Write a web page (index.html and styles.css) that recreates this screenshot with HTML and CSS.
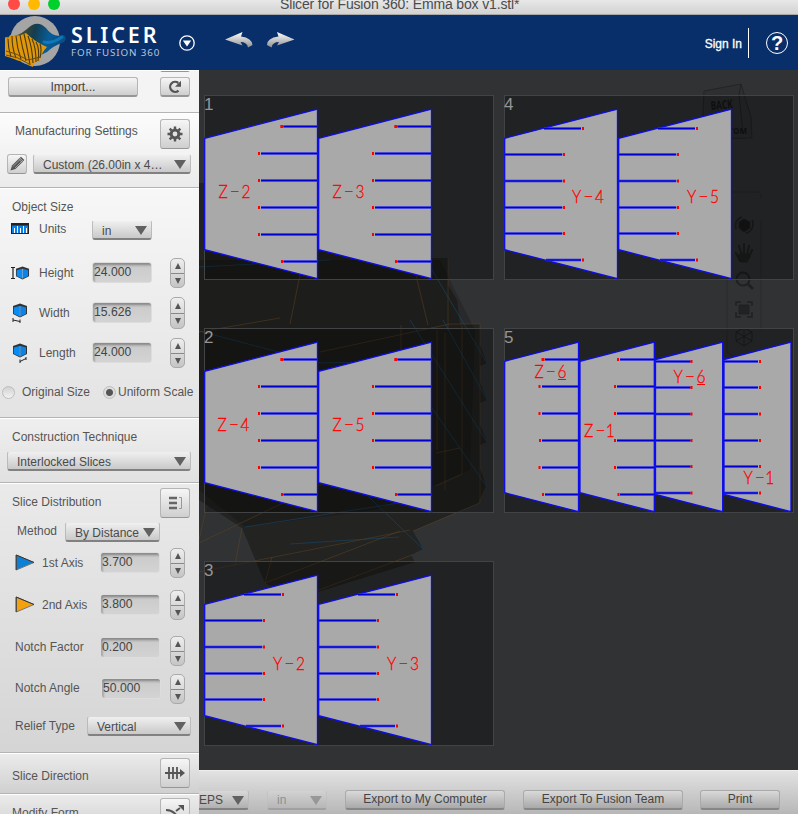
FILE: index.html
```html
<!DOCTYPE html>
<html lang="en">
<head>
<meta charset="utf-8">
<title>Slicer for Fusion 360</title>
<link rel="stylesheet" href="styles.css">
</head>
<body>
<svg class="defs" width="0" height="0" aria-hidden="true">
  <symbol id="z-slice" viewBox="0 0 115 185" overflow="visible">
    <path class="part" d="M.7 43.3 113.5 14.2V183.7L.7 154.7Z"/>
    <path class="cut" d="M79.5 31.5h34M57 58.5h56.5M57 85.5h56.5M57 112.5h56.5M57 139.5h56.5M79.5 166.5h34"/>
    <path class="cut-core" d="M79.5 31.5h34M57 58.5h56.5M57 85.5h56.5M57 112.5h56.5M57 139.5h56.5M79.5 166.5h34"/>
    <path class="dot" d="M76.3 31.5h3M54 58.5h2M54 85.5h2M54 112.5h2M54 139.5h2M77 166.5h2"/>
  </symbol>
  <symbol id="y-slice" viewBox="0 0 115 185" overflow="visible">
    <path class="part" d="M.7 43.3 113.5 14.2V183.7L.7 154.7Z"/>
    <path class="cut" d="M40 33.5h37M.7 59.5h57.5M.7 86h57.5M.7 112.5h57.5M.7 138.5h57.5M42 165h35"/>
    <path class="cut-core" d="M40 33.5h37M.7 59.5h57.5M.7 86h57.5M.7 112.5h57.5M.7 138.5h57.5M42 165h35"/>
    <path class="dot" d="M78 33.5h2M59 59.5h2M59 86h2M59 112.5h2M59 138.5h2M78 165h2"/>
  </symbol>
  <symbol id="cube" viewBox="0 0 16 15"><path d="M1 3 8 .5 15 3v8l-7 3.5L1 11z" fill="#333"/><path d="M1.800 4.500 7.600 3v10.500L1.800 10.800z" fill="#0a8cf5"/><path d="M8.400 3 14 4.500v6.300L8.400 13.500z" fill="#0a84e8"/><path d="M8 3v10.500" stroke="#7cc4ff" stroke-width=".8"/></symbol>
</svg>

<div class="titlebar">
  <span class="light red"></span><span class="light yellow"></span><span class="light green"></span>
  <span class="title">Slicer for Fusion 360: Emma box v1.stl*</span>
</div>

<header class="header">
  <svg class="logo" width="66" height="55" viewBox="0 0 66 55">
    <defs><linearGradient id="wave" x1="0" y1="0" x2="1" y2="0.15"><stop offset="0" stop-color="#bd8a1d"/><stop offset=".32" stop-color="#3d482e"/><stop offset=".5" stop-color="#143d50"/><stop offset=".75" stop-color="#075c98"/><stop offset="1" stop-color="#0a4f86"/></linearGradient></defs>
    <circle cx="35" cy="26" r="25" fill="#a5a5a5"/>
    <path d="M6 22Q18 22 27 14Q37 4 46 13Q53 23 63 20Q68 22 64 27Q53 31 47 37L31 45L6 36Z" fill="url(#wave)"/>
    <path d="M5 22 8 24 10 20Q19 22 26 18Q35 27 47 32Q41 38 40 46L34 48 33 52 28 50 27 46Q19 47 14 44L5 41Z" fill="#df980b"/>
    <path d="M8 24q0 9 3 18M12 21q0 12 4 22M16 21q1 12 5 23M20 20q2 12 6 26M24 19q3 12 6 31M28 21q4 10 5 27M32 24q4 8 4 23M36 27q4 7 2 19M40 29q2 5 0 14" fill="none" stroke="#4c3812" stroke-width="1.100"/>
    <path d="M6 36 16 39 28 45 40 42M6 40 18 43 29 49" fill="none" stroke="#6c4c0c"/>
    <path d="M44 27Q52 29 62 22" fill="none" stroke="#1593dc" stroke-width="3" opacity=".55" stroke-linecap="round"/>
  </svg>
  <div class="brand"><div class="brand-name">SLICER</div><div class="brand-sub">FOR FUSION 360</div></div>
  <svg class="menu" width="16" height="16" viewBox="0 0 16 16"><circle cx="8" cy="8" r="7.200" fill="none" stroke="#fff" stroke-width="1.300"/><path d="M3.800 5.500h8.400L8 11.500z" fill="#fff"/></svg>
  <svg class="history" width="70" height="17" viewBox="0 0 70 17">
    <defs><linearGradient id="silver" x1="0" y1="0" x2="0" y2="1"><stop offset="0" stop-color="#fff"/><stop offset="1" stop-color="#909090"/></linearGradient></defs>
    <path d="M0 7.500 17.500 0 16 4.500Q27 6 27.500 13L23 15.500Q22 10 15.500 10L17.500 13.500Z" fill="url(#silver)"/>
    <path d="M69.500 7.500 52 0 53.500 4.500Q42 6 42 13L46.500 15.500Q47.500 10 54 10L52 13.500Z" fill="url(#silver)"/>
  </svg>
  <span class="sign-in">Sign In</span>
  <span class="divider"></span>
  <span class="help">?</span>
</header>

<div class="workspace">
<aside class="sidebar">
  <section class="files">
    <button class="btn import">Import...</button>
    <div class="file-side"><span class="btn stub"></span>
      <button class="btn refresh"><svg width="14" height="14" viewBox="0 0 14 14"><path d="M10.500 10.600A5 5 0 1 1 10.300 3" fill="none" stroke="#555" stroke-width="2.300"/><path d="M13 .7v6H7z" fill="#555"/></svg></button></div>
  </section>

  <section class="manufacturing">
    <div class="row head"><span>Manufacturing Settings</span>
      <button class="btn tool"><svg width="16" height="16" viewBox="-8 -8 16 16"><circle r="3.900" fill="none" stroke="#555" stroke-width="3"/><path d="M0-7.500V-5M0 7.500V5M-7.500 0H-5M7.500 0H5M-5.300-5.300-3.600-3.600M5.300 5.300 3.600 3.600M-5.300 5.300-3.600 3.600M5.300-5.300 3.600-3.600" stroke="#555" stroke-width="2.400"/></svg></button></div>
    <div class="row preset"><button class="btn pencil"><svg width="16" height="16" viewBox="0 0 16 16"><path d="M1.500 14.500 3 9.500 10.500 2l3.500 3.500L6.500 13z" fill="#555"/><path d="M10.800 1.700 12 .7l3.300 3.300-1 1.200z" fill="#555"/><path d="M4 10.500 11 3.500M6 12l7-7M9.500 2.800l3.800 3.800" stroke="#bbb" stroke-width=".7"/></svg></button>
      <div class="select"><span>Custom (26.00in x 4…</span><i></i></div></div>
  </section>

  <section class="object">
    <div class="row head">Object Size</div>
    <div class="row dim units"><svg width="18" height="11" viewBox="0 0 18 11"><path d="M0 0h18v11H0z" fill="#222"/><path d="M1 2.500h16V10H1z" fill="#0a7fe5"/><path d="M3.500 10V5M6.500 10V3M9.500 10V5M12.500 10V3M15.500 10V5" stroke="#fff"/></svg><span>Units</span><div class="select"><span>in</span><i></i></div></div>
    <div class="row dim"><svg width="20" height="18" viewBox="0 0 20 18"><path d="M0 3.500h4M2 3.500v11M0 14.500h4" stroke="#222" fill="none" stroke-width="1.200"/><use href="#cube" x="4" y="2" width="15" height="14"/></svg><span>Height</span><div class="field">24.000</div><div class="spin"><b></b><b></b></div></div>
    <div class="row dim"><svg width="20" height="20" viewBox="0 0 20 20"><use href="#cube" x="1" y="0" width="16" height="15"/><path d="M2 15v4M2 17l7 1.500M9 16.500v4" stroke="#222" fill="none"/></svg><span>Width</span><div class="field">15.626</div><div class="spin tall"><b></b><b></b></div></div>
    <div class="row dim"><svg width="20" height="20" viewBox="0 0 20 20"><use href="#cube" x="1" y="0" width="16" height="15"/><path d="M9 16.500v3.500M9 18.500l6-3M15 14v3" stroke="#222" fill="none"/></svg><span>Length</span><div class="field">24.000</div><div class="spin"><b></b><b></b></div></div>
    <div class="row scale"><span class="radio"></span><span>Original Size</span><span class="radio on"></span><span>Uniform Scale</span></div>
  </section>

  <section class="technique">
    <div class="row head">Construction Technique</div>
    <div class="select"><span>Interlocked Slices</span><i></i></div>
  </section>

  <section class="distribution">
    <div class="row head"><span>Slice Distribution</span><button class="btn tool"><svg width="15" height="14" viewBox="0 0 15 14"><path d="M1 2h8M1 7h8M1 12h8" stroke="#666" stroke-width="2.300"/><path d="M11 1.500h2.500v11H11" stroke="#999" fill="none"/></svg></button></div>
    <div class="row method"><span>Method</span><div class="select"><span>By Distance</span><i></i></div></div>
    <div class="row axis first"><svg width="20" height="17" viewBox="0 0 20 17"><path d="M1.200 1 19 8.500 1.200 16z" fill="#0b80d4"/><path d="M19 8.500 1.200 16V1z" fill="none" stroke="#777"/><path d="M1.200 16V1L19 8.500" fill="none" stroke="#333"/></svg><span>1st Axis</span><div class="field">3.700</div><div class="spin"><b></b><b></b></div></div>
    <div class="row axis second"><svg width="20" height="17" viewBox="0 0 20 17"><path d="M1.200 1 19 8.500 1.200 16z" fill="#f3a20d"/><path d="M19 8.500 1.200 16V1z" fill="none" stroke="#777"/><path d="M1.200 16V1L19 8.500" fill="none" stroke="#333"/></svg><span>2nd Axis</span><div class="field">3.800</div><div class="spin"><b></b><b></b></div></div>
    <div class="row notch"><span>Notch Factor</span><div class="field">0.200</div><div class="spin"><b></b><b></b></div></div>
    <div class="row notch angle"><span>Notch Angle</span><div class="field">50.000</div><div class="spin"><b></b><b></b></div></div>
    <div class="row relief"><span>Relief Type</span><div class="select"><span>Vertical</span><i></i></div></div>
  </section>

  <section class="direction">
    <div class="row head"><span>Slice Direction</span><button class="btn tool"><svg width="20" height="14" viewBox="0 0 20 14"><path d="M0 7h17M4 1v12M8 1v12M12 1v12" stroke="#555" stroke-width="1.800"/><path d="M15 3l5 4-5 4z" fill="#555"/></svg></button></div>
  </section>
  <section class="modify">
    <div class="row head"><span>Modify Form</span><button class="btn tool"><svg width="20" height="16" viewBox="0 0 20 16"><path d="M1 5Q10 5 14 15M1 10q5 0 7 6M11 6l4-3" fill="none" stroke="#555" stroke-width="2"/><path d="M13 0h6v6z" fill="#555"/></svg></button></div>
  </section>
</aside>

<main class="stage">
  <div class="viewport">
    <svg class="scene" width="599" height="700" viewBox="199 70 599 700">
      <path d="M199 183 325 178 360 183 365 220 420 258H448V285L457 300 460 324H480V345L487 363 480 366V382L487 400 480 403V425L487 442 480 445V468L486 486 478 503 413 531 423 549 411 555 415 562 295 599 265 583 242 528 199 500Z" fill="#0a0700" opacity=".34"/>
      <path d="M199 260H440L475 330 470 470 375 510 245 527 199 490Z" opacity=".16"/>
      <g fill="none" stroke="#6b4a20" stroke-width="1" opacity=".42">
        <path d="M290 324 302 265 311 207M283 364 274 412M413 263 428 325M448 258V330M199 332 280 318M320 352 450 324 480 324V503L413 531M199 543 325 483M199 572 410 530M265 583 400 531M235 565 242 528M265 583 272 557M295 599 412 555M437 330V450M462 325V474L436 486M445 333V490M436 453 460 448M401 325V410M199 540 207 505"/>
      </g>
      <g fill="none" stroke="#164f78" stroke-width="1" opacity=".5">
        <path d="M199 267 330 260M199 331 320 363 410 361M245 527 399 503M290 544 399 537M291 420 320 450 423 549M400 362 487 487M410 320 487 442M425 258 487 363M443 320 487 400"/>
      </g>
      <g class="viewcube"><path d="M704 91 741 84 751 117 752 138 702 139Z" fill="#2e2f30" stroke="#242424"/><path d="M741 84 739 94 743 134" fill="none" stroke="#222"/><text transform="translate(711 110) rotate(-5)" textLength="22" lengthAdjust="spacingAndGlyphs">BACK</text><text x="712" y="134" class="bottom">BOTTOM</text></g>
      <g class="nav" fill="none" stroke="#1f2021"><path d="M727 192h31q3 0 3 6M727 350q0 5 6 5M727 193v157M761 220v110" opacity=".4"/>
        <path d="M739 222l5-3 6 3v6l-6 4-5-4z" fill="#191a1b"/><path d="M736 229a9 9 0 0 1 6-12M752 220a9 9 0 0 1-6 13" stroke-width="1.500"/>
        <path d="M740 261 736 253M742 255 739 246M744 254V244M747 255 749 246M749 257 752 250" stroke-width="2" stroke-linecap="round"/><path d="M740 254h9l1 3-3 5h-6l-4-6z" fill="#1f2021"/>
        <circle cx="743" cy="279" r="6.500" stroke-width="2"/><path d="M748 284l5 5" stroke-width="3"/>
        <path d="M736 306v-4h5M747 302h5v4M736 312v5h5M747 317h5v-5" stroke-width="1.500"/><path d="M739 305h10v9h-10z" fill="#222"/>
        <path d="M744 328l8 4v9l-8 5-8-5v-9zM744 328v18M736 332l16 9M752 332l-16 9"/></g>
    </svg>
    <div class="sheets">
      <div class="sheet"><svg viewBox="0 0 290 185"><use href="#z-slice" width="115" height="185"/><use href="#z-slice" x="114" width="115" height="185"/>
        <text class="num" x="0" y="15">1</text>
        <text class="tag" transform="translate(14.5 103) scale(.84 1)"><tspan>Z</tspan><tspan x="13" dy="-1" textLength="13" lengthAdjust="spacingAndGlyphs">-</tspan><tspan x="27.500" dy="1">2</tspan></text>
        <text class="tag" transform="translate(128.500 103) scale(.84 1)"><tspan>Z</tspan><tspan x="13" dy="-1" textLength="13" lengthAdjust="spacingAndGlyphs">-</tspan><tspan x="27.500" dy="1">3</tspan></text></svg></div>
      <div class="sheet"><svg viewBox="0 0 290 185"><use href="#z-slice" width="115" height="185"/><use href="#z-slice" x="114" width="115" height="185"/>
        <text class="num" x="0" y="15">2</text>
        <text class="tag" transform="translate(13.500 103) scale(.84 1)"><tspan>Z</tspan><tspan x="13" dy="-1" textLength="13" lengthAdjust="spacingAndGlyphs">-</tspan><tspan x="27.500" dy="1">4</tspan></text>
        <text class="tag" transform="translate(128.500 103) scale(.84 1)"><tspan>Z</tspan><tspan x="13" dy="-1" textLength="13" lengthAdjust="spacingAndGlyphs">-</tspan><tspan x="27.500" dy="1">5</tspan></text></svg></div>
      <div class="sheet"><svg viewBox="0 0 290 185"><use href="#y-slice" width="115" height="185"/><use href="#y-slice" x="114" width="115" height="185"/>
        <text class="num" x="0" y="15">3</text>
        <text class="tag" transform="translate(69 108.500) scale(.84 1)"><tspan>Y</tspan><tspan x="13" dy="-1" textLength="13" lengthAdjust="spacingAndGlyphs">-</tspan><tspan x="27.500" dy="1">2</tspan></text>
        <text class="tag" transform="translate(183 108.500) scale(.84 1)"><tspan>Y</tspan><tspan x="13" dy="-1" textLength="13" lengthAdjust="spacingAndGlyphs">-</tspan><tspan x="27.500" dy="1">3</tspan></text></svg></div>
      <div class="sheet"><svg viewBox="0 0 290 185"><use href="#y-slice" width="115" height="185"/><use href="#y-slice" x="114" width="115" height="185"/>
        <text class="num" x="0" y="15">4</text>
        <text class="tag" transform="translate(68 108) scale(.84 1)"><tspan>Y</tspan><tspan x="13" dy="-1" textLength="13" lengthAdjust="spacingAndGlyphs">-</tspan><tspan x="27.500" dy="1">4</tspan></text>
        <text class="tag" transform="translate(183 108) scale(.84 1)"><tspan>Y</tspan><tspan x="13" dy="-1" textLength="13" lengthAdjust="spacingAndGlyphs">-</tspan><tspan x="27.500" dy="1">5</tspan></text></svg></div>
      <div class="sheet"><svg viewBox="0 0 290 185">
        <path class="part" d="M.7 33.300 74.500 14.200V183.700L.7 164.700ZM76 33.300 150.300 14.200V183.700L76 164.700ZM151.500 31.500 218.700 14.200V183.700L151.500 166.500ZM220 31.500 287 14.200V183.700L220 166.500Z"/>
        <path class="cut" d="M41 31.500h33M38 58.500h36M38 85.500h36M38 112.500h36M38 139.500h36M41 166.500h33M116 31.500h34M113 58.500h37M113 85.500h37M113 112.500h37M113 139.500h37M116 166.500h34M151.500 33.500h35M151.500 59.500h35M151.500 86h35M151.500 112.500h35M151.500 138.500h35M151.500 165h35M220 33.500h34M220 59.500h34M220 86h34M220 112.500h34M220 138.500h34M220 165h34"/>
        <path class="cut-core" d="M41 31.500h33M38 58.500h36M38 85.500h36M38 112.500h36M38 139.500h36M41 166.500h33M116 31.500h34M113 58.500h37M113 85.500h37M113 112.500h37M113 139.500h37M116 166.500h34M151.500 33.500h35M151.500 59.500h35M151.500 86h35M151.500 112.500h35M151.500 138.500h35M151.500 165h35M220 33.500h34M220 59.500h34M220 86h34M220 112.500h34M220 138.500h34M220 165h34"/>
        <path class="dot" d="M37.500 31.500h3M34.500 58.500h2M34.500 85.500h2M35 112.500h2M34.500 139.500h2M38 166.500h2M113 31.500h2M110 58.500h2M110 85.500h2M110 112.500h2M110 139.500h2M113.500 166.500h2M186.500 33.500h2M186.500 59.500h2M186.500 86h2M186.500 112.500h2M186.500 138.500h2M186.500 165h2M255 33.500h2M255 59.500h2M255 86h2M255 112.500h2M255 138.500h2M255 165h2"/>
        <text class="num" x="0" y="15">5</text>
        <text class="tag" transform="translate(30.500 50) scale(.84 1)"><tspan>Z</tspan><tspan x="13" dy="-1" textLength="13" lengthAdjust="spacingAndGlyphs">-</tspan><tspan x="27.500" dy="1">6</tspan></text>
        <text class="tag" transform="translate(80 108.500) scale(.84 1)"><tspan>Z</tspan><tspan x="13" dy="-1" textLength="13" lengthAdjust="spacingAndGlyphs">-</tspan><tspan x="26" dy="1">1</tspan></text>
        <text class="tag" transform="translate(169.500 55) scale(.84 1)"><tspan>Y</tspan><tspan x="13" dy="-1" textLength="13" lengthAdjust="spacingAndGlyphs">-</tspan><tspan x="27.500" dy="1">6</tspan></text>
        <text class="tag" transform="translate(239.500 156) scale(.84 1)"><tspan>Y</tspan><tspan x="13" dy="-1" textLength="13" lengthAdjust="spacingAndGlyphs">-</tspan><tspan x="26" dy="1">1</tspan></text>
        <path d="M54 51.500h8M193 56.500h8" stroke="#f00" stroke-width="1"/></svg></div>
    </div>
  </div>
  <footer class="actions">
    <div class="select format"><span>EPS</span><i></i></div>
    <div class="select unit"><span>in</span><i></i></div>
    <button class="btn wide">Export to My Computer</button>
    <button class="btn wide">Export To Fusion Team</button>
    <button class="btn print">Print</button>
  </footer>
</main>
</div>
</body>
</html>
```
FILE: styles.css
```css
* { box-sizing: border-box; }
body { margin: 0; width: 798px; height: 814px; overflow: hidden; font: 12px/16px "Liberation Sans", Arial, sans-serif; color: #555; background: #313234; }
svg { display: block; flex: none; }
.defs { position: absolute; }
button { font: inherit; color: #444; padding: 0; }

.titlebar { height: 15px; display: flex; overflow: hidden; padding-left: 8px; gap: 8px; background: linear-gradient(#e8e8e8, #d2d2d2); border-bottom: 1px solid #a9a9a9; }
.light { width: 12px; height: 12px; margin-top: -2px; border-radius: 50%; flex: none; }
.red { background: #ff4a45; }
.yellow { background: #ffb900; }
.green { background: #00d02c; }
.title { margin: -4px 0 0 212px; font-size: 14px; line-height: 17px; color: #4b4b4b; white-space: nowrap; letter-spacing: -.15px; }

.header { height: 55px; display: flex; align-items: center; background: #082f6a; color: #fff; }
.brand { margin-left: 5px; width: 98px; }
.brand-name { font: 600 21.5px/23px "Noto Sans", sans-serif; letter-spacing: 2.9px; margin-top: -3px; }
.brand-sub { font: 9.8px/13px "Noto Sans", sans-serif; letter-spacing: .9px; color: #b8c4da; white-space: nowrap; }
.menu { margin-left: 10px; }
.history { margin: -4px 0 0 30px; }
.sign-in { margin-left: auto; font-size: 12px; margin-top: 3px; -webkit-text-stroke: .3px #fff; }
.divider { width: 1px; height: 30px; margin-left: 6px; background: #fff; }
.help { width: 22px; height: 22px; margin: 0 10px 0 17px; border: 1px solid #fff; border-radius: 50%; text-align: center; font: bold 20px/20px "Liberation Sans", sans-serif; }

.workspace { height: 744px; display: flex; }
.sidebar { width: 199px; flex: none; overflow: hidden; background: #e0e0e0; }
.sidebar section { border-bottom: 1px solid #b4b4b4; border-top: 1px solid #fff; overflow: hidden; }
.row { display: flex; align-items: center; white-space: nowrap; }
.row.head { padding: 0 9px 0 12px; justify-content: space-between; }

.btn { border: 1px solid #b5b5b5; border-bottom: 2px solid #969696; border-radius: 3px; background: linear-gradient(#f6f6f6, #cfcfcf); display: flex; align-items: center; justify-content: center; flex: none; }
.tool { width: 30px; height: 30px; border-width: 1px; }
.select { height: 20px; display: flex; align-items: center; justify-content: space-between; padding: 2px 4px 0 9px; border: 1px solid transparent; border-left-color: #bbb; border-right-color: #bbb; border-bottom: 2px solid #818181; border-radius: 3px; background: linear-gradient(#f0f0f0, #c9c9c9) padding-box; color: #4a4a4a; flex: none; white-space: nowrap; }
.select i { border: 6px solid transparent; border-top: 9px solid #616161; border-bottom: 0; }
.field { height: 21px; width: 60px; padding-left: 1px; line-height: 19px; border-radius: 3px; border: 1px solid #ddd; background: linear-gradient(#aaa, #ccc 25%, #d3d3d3); box-shadow: inset 2px 2px 2px rgba(0,0,0,.2); color: #444; font-size: 12.2px; flex: none; }
.spin { width: 15px; height: 30px; display: grid; grid-template-rows: 1fr 1fr; border: 1px solid #aaa; border-radius: 5px; background: linear-gradient(#eee, #c5c5c5); flex: none; }
.spin b { display: flex; align-items: center; justify-content: center; }
.spin b + b { border-top: 1px solid #888; }
.spin b::after { content: ""; border: 3.5px solid transparent; border-bottom: 6px solid #555; border-top: 0; }
.spin b + b::after { border-top: 6px solid #555; border-bottom: 0; }
.tall { height: 32px; }

.files { height: 43px; display: flex; justify-content: space-between; padding: 0 9px 0 8px; background: #f4f4f4; }
.import { width: 130px; height: 20px; margin-top: 6px; font-size: 12.3px; }
.stub { height: 5px; margin-top: -4px; border-top: 0; }
.refresh { width: 30px; height: 20px; margin-top: 5px; }

.manufacturing { height: 75px; background: linear-gradient(#fcfcfc, #ebebeb); padding-top: 5px; }
.manufacturing .head { padding-left: 15px; }
.manufacturing .head span { margin-top: -7px; }
.preset { margin-top: 4px; padding-left: 7px; gap: 6px; }
.pencil { width: 20px; height: 20px; border-width: 1px; }
.preset .select { width: 158px; margin-top: 1px; }

.object { height: 230px; background: linear-gradient(#f7f7f7, #e3e3e3); }
.object .head { margin-top: 10px; }
.dim { display: grid; grid-template-columns: 28px 53px 78px 16px; height: 32px; margin: 8px 0 0 11px; }
.dim .field { margin-top: -1px; }
.dim.units { height: 20px; margin-top: 5px; }
.units > svg, .units > span { margin-top: -3px; }
.units + .dim { margin-top: 17px; }
.dim .select { width: 60px; }
.scale { margin: 15px 0 0 2px; }
.radio { width: 13px; height: 13px; margin-right: 7px; border: 1px solid #bdbdbd; border-radius: 50%; background: linear-gradient(#d2d2d2, #f2f2f2); flex: none; }
.radio.on { margin: 0 2px 0 13px; background: radial-gradient(#555 0 3px, #ddd 4px); }

.technique { height: 65px; background: linear-gradient(#efefef, #e1e1e1); }
.technique .head { margin-top: 10px; }
.technique .select { width: 184px; margin: 6px 0 0 7px; }

.distribution { height: 270px; padding-top: 4px; background: linear-gradient(#eaeaea, #d5d5d5); }
.distribution .head span { margin-top: -2px; }
.method { margin-top: 4px; padding-left: 17px; }
.method > span { width: 48px; margin-top: -3px; }
.method .select { width: 95px; }
.axis { display: grid; grid-template-columns: 27px 58px 70px 16px; height: 30px; margin-left: 15px; }
.axis .field { margin-top: -1px; }
.first { margin-top: 6px; }
.second { margin-top: 12px; }
.axis svg, .axis > span { margin-top: -1px; }
.notch { display: grid; grid-template-columns: 85px 70px 16px; margin: 16px 0 0 15px; height: 30px; }
.notch > span, .notch > .field { margin-top: -8px; }
.notch.angle { margin-top: 8px; }
.notch.angle > span, .notch.angle > .field { margin-top: -2px; }
.angle > .field { margin-left: 1px; }
.relief { margin-top: 12px; padding-left: 15px; }
.relief > span { width: 72px; margin-top: -1px; }
.relief .select { width: 104px; }

.direction { height: 41px; padding-top: 4px; background: linear-gradient(#ebebeb, #d0d0d0); }
.direction .head span { margin-top: 5px; }
.modify { height: 50px; padding-top: 3px; background: linear-gradient(#ebebeb, #c8c8c8); }

.stage { width: 599px; }
.viewport { height: 700px; position: relative; overflow: hidden; background: #313234; }
.scene { position: absolute; inset: 0; }
.viewcube text { font: bold 12px "Open Sans", sans-serif; fill: #161616; }
.viewcube .bottom { font-size: 8px; }
.sheets { position: relative; display: grid; grid-auto-flow: column; grid-template: repeat(3, 185px) / 290px 290px; gap: 48px 10px; padding: 25px 0 0 5px; }
.sheet { background: rgba(0,0,0,.31); box-shadow: inset 0 0 0 1px #424344; }
.sheet svg { width: 290px; height: 185px; overflow: visible; }
.part { fill: #a9a9a9; stroke: #0c0cec; stroke-width: 1.3; }
.cut { stroke: #2a2ae8; stroke-width: 2.6; }
.cut-core { stroke: #0000d0; stroke-width: 1; }
.dot { stroke: #f00; stroke-width: 2.8; }
.num { font: 17px "Liberation Sans", sans-serif; fill: #969696; }
.tag { font: 300 18.5px Lato, sans-serif; fill: #f00; stroke: #f00; stroke-width: .3; }

.actions { height: 44px; display: flex; align-items: center; padding-top: 14px; background: linear-gradient(#e2e2e2, #b7b7b7); border-top: 1px solid #eee; }
.actions .btn { height: 20px; font-size: 12px; background: linear-gradient(#d9d9d9, #a9a9a9); border-color: #aaa; border-bottom-color: #868686; }
.actions .select { background: linear-gradient(#d8d8d8, #b0b0b0) padding-box; }
.actions .format { width: 50px; padding-left: 0; border-left: 0; border-radius: 0 3px 3px 0; }
.unit { width: 60px; margin: 0 18px; opacity: .45; }
.wide { width: 160px; margin-right: 18px; }
.print { width: 80px; margin-left: -1px; }
```
